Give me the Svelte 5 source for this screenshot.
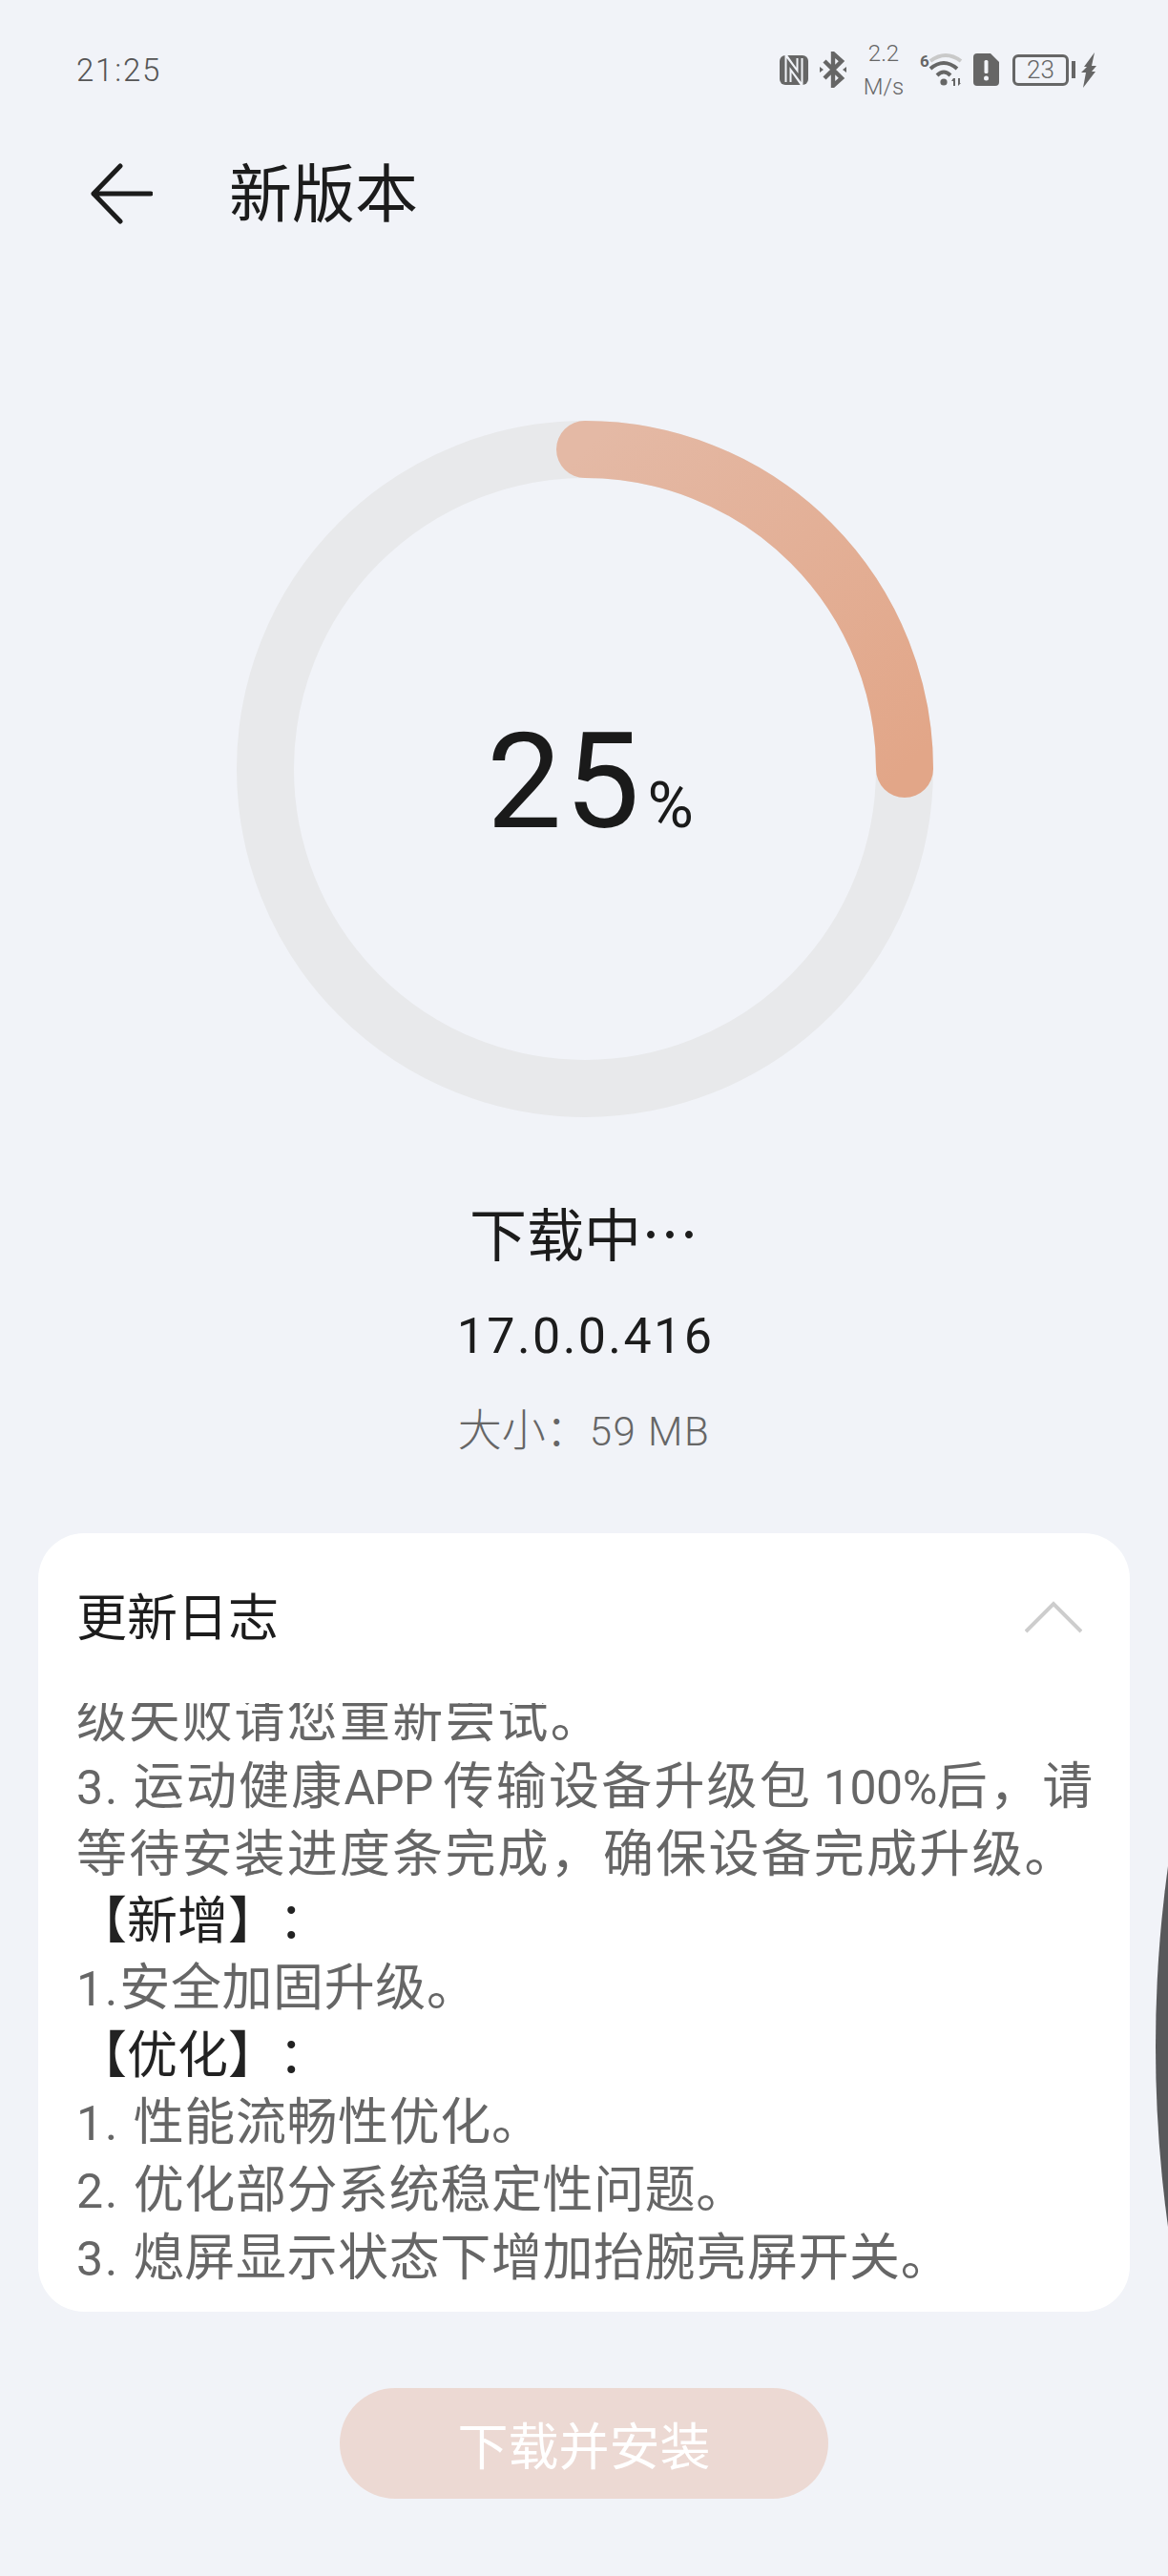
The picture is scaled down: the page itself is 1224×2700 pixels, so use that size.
<script>
  const progress = 25;
  const radius = 335;
  const circumference = 2 * Math.PI * radius;
  const dash = (progress / 100) * circumference;
</script>

<div class="page">
  <div class="status">
    <span class="time">21:25</span>
    <div class="status-icons">
      <svg class="nfc" viewBox="0 0 30 31" width="30" height="31">
        <rect width="30" height="31" rx="6" fill="#666" />
        <path d="M9 28V7l12 17V3" fill="none" stroke="#f1f3f8" stroke-width="7" />
        <path d="M9 31V7.5l12 16V0" fill="none" stroke="#666" stroke-width="3" />
      </svg>
      <svg class="bt" viewBox="0 0 30 38" width="30" height="38">
        <path d="M6 10l18 18-9 8V2l9 8L6 28" fill="none" stroke="#666" stroke-width="4.4" />
        <path d="M1 16l4 3-4 3zM29 16l-4 3 4 3z" fill="#666" />
      </svg>
      <div class="speed"><span>2.2</span><span>M/s</span></div>
      <svg class="wifi" viewBox="0 0 48 36" width="48" height="36">
        <path d="M12 9Q28-3 44 9" fill="none" stroke="#c9c9c9" stroke-width="4" />
        <path d="M12 17Q26 5 40 17M19 24Q26 17 33 24" fill="none" stroke="#666" stroke-width="4" />
        <circle cx="26" cy="31" r="3.6" fill="#666" />
        <path d="M36 27l-2 3h2v5h2V27zM41 27v8l3-3h-1v-5z" fill="#666" />
        <text x="1" y="15" class="wifi-six">6</text>
      </svg>
      <svg class="sim" viewBox="0 0 27 34" width="27" height="34">
        <path d="M4 0h14l9 9v21a4 4 0 0 1-4 4H4a4 4 0 0 1-4-4V4a4 4 0 0 1 4-4z" fill="#666" />
        <rect x="11.5" y="7" width="4" height="14" rx="1.5" fill="#f1f3f8" />
        <circle cx="13.5" cy="26" r="2.5" fill="#f1f3f8" />
      </svg>
      <div class="battery"><span class="battery-level">23</span><span class="battery-cap"></span></div>
      <svg class="bolt" viewBox="0 0 16 37" width="16" height="37">
        <path d="M14 0L3 15h3L0 21h5L2 37 15 20h-4l5-6h-5z" fill="#666" />
      </svg>
    </div>
  </div>

  <div class="titlebar">
    <svg class="back" viewBox="0 0 66 64" width="66" height="64">
      <path d="M32 3L4 32l28 29M4 32h60" fill="none" stroke="#1c1c1c" stroke-width="5" stroke-linecap="round" stroke-linejoin="round" />
    </svg>
    <h1>新版本</h1>
  </div>

  <div class="ring">
    <svg viewBox="0 0 730 730" width="730" height="730">
      <defs>
        <linearGradient id="arc" x1="0" y1="0" x2="1" y2="1">
          <stop offset="0" stop-color="#e4b9a5" />
          <stop offset="1" stop-color="#e2a688" />
        </linearGradient>
      </defs>
      <circle cx="365" cy="365" r={radius} fill="none" stroke="#e8e9eb" stroke-width="60" />
      <path d="M365 30A335 335 0 0 1 700 365" fill="none" stroke="url(#arc)" stroke-width="60" stroke-linecap="round" stroke-dasharray="{dash} {circumference}" />
    </svg>
    <div class="percent"><span class="num">{progress}</span><span class="sign">%</span></div>
  </div>

  <div class="state">下载中…</div>
  <div class="version">17.0.0.416</div>
  <div class="size">大小：<span class="size-val">59 MB</span></div>

  <section class="card">
    <header>
      <h2>更新日志</h2>
      <svg viewBox="0 0 60 34" width="60" height="34">
        <path d="M1 32L30 3l29 29" fill="none" stroke="#cdcdcd" stroke-width="4" />
      </svg>
    </header>
    <div class="log">
      <p class="wide">级失败请您重新尝试。</p>
      <p class="wide"><span class="en">3.&nbsp;</span>运动健康<span class="en caps">APP&nbsp;</span>传输设备升级包<span class="en tight">&nbsp;100%</span>后，请</p>
      <p class="wide">等待安装进度条完成，确保设备完成升级。</p>
      <p class="head">【新增】：</p>
      <p><span class="en">1.</span>安全加固升级。</p>
      <p class="head">【优化】：</p>
      <p><span class="en">1.&nbsp;</span>性能流畅性优化。</p>
      <p><span class="en">2.&nbsp;</span>优化部分系统稳定性问题。</p>
      <p><span class="en">3.&nbsp;</span>熄屏显示状态下增加抬腕亮屏开关。</p>
    </div>
  </section>

  <button type="button">下载并安装</button>

  <div class="edge"></div>
</div>

<style>
  :global(body) {
    margin: 0;
    background: #f1f3f8;
  }

  .page {
    position: relative;
    width: 1224px;
    height: 2700px;
    overflow: hidden;
    display: flex;
    flex-direction: column;
    align-items: center;
    background: #f1f3f8;
    color: #1c1c1c;
    font-family: Roboto, "Noto Sans CJK SC", sans-serif;
  }

  .status {
    align-self: stretch;
    height: 54px;
    padding: 46px 75px 0 80px;
    display: flex;
    justify-content: space-between;
    align-items: center;
  }

  .time {
    font-size: 33px;
    font-weight: 300;
    color: #555;
    letter-spacing: 1.8px;
  }

  .status-icons {
    display: flex;
    align-items: center;
  }

  .bt {
    margin-left: 11px;
  }

  .speed {
    margin-left: 19px;
    width: 38px;
    display: flex;
    flex-direction: column;
    align-items: center;
    gap: 9px;
    font-size: 24px;
    line-height: 26px;
    font-weight: 300;
    color: #666;
  }

  .wifi {
    margin-left: 18px;
  }

  .wifi-six {
    font-size: 17px;
    font-weight: 700;
    fill: #666;
  }

  .sim {
    margin-left: 9px;
  }

  .battery {
    margin-left: 14px;
    display: flex;
    align-items: center;
  }

  .battery-level {
    box-sizing: border-box;
    width: 59px;
    height: 33px;
    border: 3px solid #666;
    border-radius: 6px;
    font-size: 26px;
    line-height: 27px;
    font-weight: 300;
    text-align: center;
    color: #666;
  }

  .battery-cap {
    width: 4px;
    height: 18px;
    margin-left: 3px;
    background: #666;
  }

  .bolt {
    margin-left: 6px;
  }

  .titlebar {
    align-self: stretch;
    height: 96px;
    margin-top: 56px;
    padding-left: 94px;
    display: flex;
    align-items: center;
  }

  .back {
    margin-top: -2px;
  }

  h1 {
    margin: 2px 0 0 80px;
    font-size: 66px;
    font-weight: 400;
    line-height: 96px;
  }

  .ring {
    position: relative;
    width: 730px;
    height: 730px;
    margin-top: 189px;
    margin-left: 2px;
  }

  .ring svg {
    display: block;
  }

  .percent {
    position: absolute;
    left: 262px;
    top: 298px;
    display: flex;
    align-items: baseline;
    font-weight: 400;
    line-height: 160px;
    color: #1a1a1a;
  }

  .num {
    font-size: 140px;
    letter-spacing: 3px;
  }

  .sign {
    font-size: 66px;
    margin-left: 5px;
  }

  .state {
    margin-top: 80px;
    font-size: 60px;
    line-height: 80px;
    font-family: "Noto Sans CJK SC", sans-serif;
  }

  .version {
    margin-top: 38px;
    padding-left: 3px;
    font-size: 52px;
    line-height: 64px;
    letter-spacing: 2.4px;
  }

  .size {
    margin-top: 38px;
    font-size: 46px;
    line-height: 56px;
    color: #666;
    font-weight: 300;
  }

  .size-val {
    font-size: 42px;
    letter-spacing: 1.5px;
  }

  .card {
    box-sizing: border-box;
    width: 1144px;
    height: 816px;
    margin-top: 78px;
    padding: 0 50px 0 40px;
    background: #fff;
    border-radius: 48px;
    display: flex;
    flex-direction: column;
  }

  header {
    height: 178px;
    flex: none;
    padding-top: 50px;
    box-sizing: border-box;
    display: flex;
    justify-content: space-between;
    align-items: flex-start;
  }

  header svg {
    margin-top: 21px;
  }

  h2 {
    margin: 0;
    font-size: 53px;
    font-weight: 400;
    line-height: 80px;
  }

  .log {
    flex: 1;
    overflow: hidden;
    margin-right: -30px;
    color: #666;
    font-size: 53px;
    letter-spacing: 0.6px;
    line-height: 70px;
    text-spacing-trim: space-all;
  }

  .log p {
    margin: 0;
    white-space: nowrap;
  }

  .log p:first-child {
    margin-top: -17px;
  }

  .log p.wide {
    letter-spacing: 2.2px;
  }

  .log p.head {
    color: #222;
    letter-spacing: 0;
  }

  .en {
    font-size: 50px;
    letter-spacing: 2px;
  }

  .en.caps {
    letter-spacing: -1px;
  }

  .en.tight {
    letter-spacing: -0.5px;
  }

  button {
    width: 512px;
    height: 116px;
    margin-top: 80px;
    border: none;
    border-radius: 58px;
    background: #ecd9d3;
    color: #fff;
    font-family: inherit;
    font-size: 53px;
  }

  /* the dark sliver of the side button, lies over the margin */
  .edge {
    position: absolute;
    left: 1211px;
    top: 765px;
    width: 2760px;
    height: 2760px;
    border-radius: 50%;
    background: #58595b;
  }
</style>
